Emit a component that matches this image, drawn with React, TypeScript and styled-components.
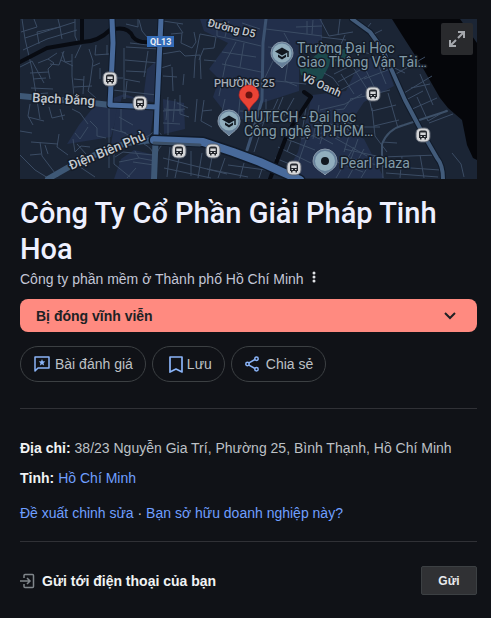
import React from "react";
import styled, { createGlobalStyle } from "styled-components";

const GlobalStyle = createGlobalStyle`
  * { box-sizing: border-box; }
  body {
    margin: 0;
    background: #101217;
    color: #bdc1c6;
    font-family: "Liberation Sans", Arial, sans-serif;
    font-size: 14px;
    line-height: 20px;
  }
`;

const Panel = styled.main`
  padding: 19px 14px 23px 20px;
`;

const MapFrame = styled.section`
  position: relative;
  height: 160px;
  overflow: hidden;
  background: #1b2535;
`;

const MapDrawing = styled.svg`
  display: block;
  width: 100%;
  height: 100%;
  font-family: Roboto, sans-serif;
`;

const ExpandButton = styled.button`
  position: absolute;
  top: 4px;
  right: 4px;
  display: flex;
  align-items: center;
  justify-content: center;
  width: 32px;
  height: 32px;
  padding: 0;
  border: 0;
  border-radius: 2px;
  background: #292a2d;
  color: #a5a8ad;
  cursor: pointer;
`;

const Title = styled.h1`
  margin: 16px 0 0;
  color: #eef0ff;
  font-family: "Google Sans", Roboto, sans-serif;
  font-size: 29px;
  font-weight: 500;
  line-height: 36px;
`;

const Subtitle = styled.div`
  display: flex;
  align-items: center;
  gap: 4px;
  margin-top: 2px;
  color: #c3c6d6;
`;

const MoreButton = styled.button`
  display: flex;
  align-items: center;
  padding: 0 4px 4px;
  border: 0;
  background: none;
  color: #dfe1e5;
  cursor: pointer;
`;

const Banner = styled.button`
  display: flex;
  align-items: center;
  justify-content: space-between;
  width: 100%;
  height: 33px;
  margin-top: 10px;
  padding: 0 20px 0 16px;
  border: 0;
  border-radius: 8px;
  background: #ff8a80;
  color: #202124;
  font: bold 14px/20px "Liberation Sans", Arial, sans-serif;
  cursor: pointer;
`;

const Actions = styled.div`
  display: flex;
  flex-wrap: wrap;
  gap: 6px;
  margin-top: 14px;
`;

const Pill = styled.button`
  display: flex;
  align-items: center;
  gap: 4px;
  height: 36px;
  padding: 0 12px;
  border: 1px solid #3c4043;
  border-radius: 18px;
  background: transparent;
  color: #bdc1c6;
  font: 14px/20px "Liberation Sans", Arial, sans-serif;
  cursor: pointer;

  svg {
    color: #8ab4f8;
  }
`;

const Divider = styled.hr`
  height: 1px;
  margin: ${({ $top }: { $top: number }) => $top}px 0 0;
  border: 0;
  background: #303136;
`;

const Facts = styled.dl`
  display: grid;
  gap: 10px;
  margin: 29px 0 0;
`;

const Fact = styled.div`
  display: flex;
  gap: 4px;

  dt {
    flex: none;
    color: #f1f3f4;
    font-weight: bold;
  }

  dd {
    margin: 0;
  }
`;

const Link = styled.a`
  color: #6f9fff;
  text-decoration: none;
`;

const Suggestions = styled.p`
  margin: 15px 0 0;
`;

const SendRow = styled.form`
  display: flex;
  align-items: center;
  gap: 7px;
  margin-top: 24px;
  color: #f1f3f4;
  font-weight: bold;
`;

const SendButton = styled.button`
  width: 56px;
  height: 29px;
  margin-left: auto;
  padding: 0;
  border: 1px solid #3c4043;
  border-radius: 2px;
  background: #303134;
  color: #e8eaed;
  font: bold 12px/16px "Liberation Sans", Arial, sans-serif;
  cursor: pointer;
`;

const BusStop = ({ x, y }: { x: number; y: number }) => (
  <g transform={`translate(${x} ${y})`}>
    <rect x="-7" y="-7" width="14" height="14" rx="5" fill="#d5d6d8" stroke="#59616e" />
    <path d="M-4-2.5Q-4-4.5-2-4.5H2Q4-4.5 4-2.5V3H3V4.5H1.5V3H-1.5V4.5H-3V3H-4Z" fill="#24272d" />
    <path d="M-2.7-2.5H2.7V0H-2.7Z" fill="#d5d6d8" />
    <path d="M-2.5 1.5H-1M1 1.5H2.5" stroke="#d5d6d8" />
  </g>
);

const SchoolPin = ({ x, y }: { x: number; y: number }) => (
  <g transform={`translate(${x} ${y})`}>
    <path d="M0 15C-2 12-11 8-11 0A11 11 0 1 1 11 0C11 8 2 12 0 15Z" fill="#66809a" stroke="#8797a8" />
    <circle r="9.5" fill="#91aebd" />
    <path d="M-7-1.5 0-5.5 7-1.5 0 2.5Z" fill="#111820" />
    <path d="M-4 1.5 0 4 4 1.5V4L0 6.5-4 4Z" fill="#111820" />
    <path d="M6-1.5V4" stroke="#111820" strokeWidth="1.5" />
  </g>
);

const minorStreets = [
  "M2 0 5 20 12 50 20 100M14 0 17 8 1 13M5 19 55 3M3 31 27 20 57 11M55 0V17L58 24M19 25 17 13 40 8 42 20M40 8 38 0",
  "M0 48 12 42 24 64M18 44 28 40 34 44 28 50 30 60M28 40 37 34M44 32 39 46 30 45M52 35V57L54 77M41 41 53 47M42 33 45 43 52 42M61 26 55 39M69 30 73 42 70 64 68 72 76 79M73 47 80 44M76 26 75 36 89 35M87 26V36M10 54 29 53M13 60 26 59M11 69 33 70M15 75 28 74M54 60 64 61M64 57 63 75M54 68 72 67",
  "M104 29V80M106 28 139 30M105 41 139 44M106 52 126 53M104 60 120 63M118 0V8L106 5M110 24 128 26M119 1 122 12 127 18M128 32 124 58M93 59H103M93 71 137 76M80 49V60M107 62 105 80",
  "M10 85 8 97 13 106M8 98 24 102M29 88 32 99 45 96M0 112 12 114M11 123 38 125M20 123 22 137 38 158M39 115 37 128 48 136M40 90 43 101M52 90 60 94 68 105M53 120 55 133 61 127 70 128M55 114 60 120 68 108M57 125 66 135M0 136 15 151 28 159M10 136 21 135M25 126 28 135M70 102 77 109V117L86 119M64 139 60 148 75 158",
  "M89 86V149M101 90V112L112 118M91 110 106 114M99 98 113 106M94 134V145L110 158M115 132 119 139 135 142M95 138 103 133 133 136M113 143 134 146M107 159 116 149M99 143 119 139M148 82V116M155 80 153 103M168 89 157 84M144 90 163 92M143 104 160 105M136 108Q142 120 151 122M124 119Q136 114 137 105M124 125Q134 130 134 139M145 123Q137 130 136 138",
  "M143 2 163 5M151 15 162 14 161 24 172 29 176 23 174 13M157 5 163 14M180 15 175 40 174 59M142 35 160 32 165 37 180 36 181 60M152 48 153 72M141 49 151 46M184 41 196 42M180 15 196 18 194 29 184 30M184 29 179 41M143 57 157 58M164 55 163 66",
  "M197 4V17L216 21 241 27M216 23 206 42 199 77M202 45 241 53M202 33 236 38M224 24 220 48M209 2 205 18M240 10 222 4M246 10 302 17M276 8 302 7M287 2V15M293 1 292 15M248 28 266 30M264 14 269 23M269 36 265 62 277 67M247 61 286 65M253 42 242 65",
  "M148 78 146 101M160 76V95L169 98M177 80 175 103M184 81 181 102 192 108M143 92 165 90M182 92 192 91M220 80 218 100M220 92 237 93M205 80 202 93M246 80V96L234 133M258 80 249 100 235 107M274 79 264 97M241 91H260M263 78 252 105",
  "M150 128 147 158M161 130 155 159M171 132V157M182 134 178 159M192 138 188 159M205 139 198 159M143 139 207 155M144 149 191 159M187 150 228 158M208 146 246 151M224 144 220 159M243 147 239 159",
  "M286 89 281 119M299 86 293 120M310 91 300 125M269 107 300 120M264 119 295 131M258 128 291 144M255 139 277 148M278 104 267 133M290 110 278 144M281 120 305 113M300 118 313 125",
  "M300 0 309 17 333 13M301 18 326 21M320 0 318 16M325 16 321 25M347 9 351 4M352 16 362 11M307 37 323 35M314 55 334 45M318 63 340 51M321 71 347 57M321 55 334 75M331 45 351 76M342 43 357 74M355 38 366 65M344 60 373 49M322 42 334 31 351 35M366 45 385 54M304 54 313 59 319 67",
  "M330 80 346 77 370 71M349 79 352 92M352 92 376 86M354 107 379 101M352 89 355 117 367 133M368 74 378 109M362 123 377 124M300 91 325 85 342 75M315 90 333 118M304 113 320 119M310 105 329 111M321 101 341 108 360 108M331 80 324 90 315 91M397 78 408 102 427 91M384 82 403 72M390 91 417 79M376 55 405 38M384 74 412 57M400 55 413 86M391 69 410 65M409 104 433 95",
  "M324 130 361 138 418 136M322 137 357 146M317 143 343 153M334 128 316 159M344 130 328 159M355 136 341 159M382 137 380 159M400 136 404 159M362 147 420 151M362 137 363 159M366 154 418 158M315 119 347 137M330 113 324 133M338 120 331 140",
  "M432 134 441 145 444 158",
];

const MapPreview = () => (
  <MapFrame aria-label="Bản đồ">
    <MapDrawing viewBox="0 0 457 160" preserveAspectRatio="xMidYMid slice" role="img" aria-label="Bản đồ Phường 25">
      <rect width="457" height="160" fill="#1b2535" />
      <g fill="#222f4b">
        <path d="M127 50 141 38 139 84 102 78 91 118 47 125 59 106 72 90 91 80 104 75 123 81Z" />
        <path d="M180 0H302V27L279 36V72L242 84 235 104 207 96 193 78 199 60 189 50 208 24 184 12Z" />
        <path d="M97 88 134 89 130 118 113 125 90 132Z" />
        <path d="M114 131 135 136 132 160H94L101 140Z" />
        <path d="M292 76 326 72 340 42 363 35 374 67 344 83 326 110 344 120 364 159H263L278 133Z" />
        <path d="M143 80 164 84 165 110 144 115Z" />
      </g>
      <path d="M278 42 291 40 302 31 311 37 309 47 300 64 281 56ZM311 34 327 29V39L313 43Z" fill="#1b494c" />
      <path d="M372 0 382 16 400 44 420 79 428 89 442 101 447 126 453 139 457 141V24L450 14 440 0Z" fill="#05060a" />
      <g fill="none" stroke="#3b4c64" strokeWidth="1" strokeLinejoin="round">
        {minorStreets.map((street) => (
          <path key={street} d={street} />
        ))}
      </g>
      <g fill="none" strokeLinecap="round" strokeLinejoin="round">
        <path d="M0 43 27 29 62 23Q78 23 90 11 108 6 113 18 118 24 129 23M62 23V0M284 73 291 78 268 113 250 160" stroke="#080b12" strokeWidth="4" />
        <path d="M246 0 243 24 242 81 233 112 227 131" stroke="#3c5270" strokeWidth="3" />
        <path d="M362 138V125Q368 110 384 106L427 92" stroke="#3d5068" strokeWidth="2" />
        <path d="M332 0 350 13 363 31 373 54 385 81 402 113 417 139Q423 146 423 160" stroke="#101a29" strokeWidth="6" />
        <path d="M332 0 350 13 363 31 373 54 385 81 402 113 417 139Q423 146 423 160" stroke="#425b7a" strokeWidth="4" />
        <path d="M0 77 73 84 90 86M28 160Q65 137 107 124L133 121M136 110 134 160" stroke="#3e5876" strokeWidth="6" />
        <path d="M92 0 93 24 90 86 137 88M141 0 137 88 136 116" stroke="#101a29" strokeWidth="7" />
        <path d="M92 0 93 24 90 86 137 88M141 0 137 88 136 116" stroke="#486a9b" strokeWidth="5" />
        <path d="M134 121 183 123 213 133 240 143 280 161" stroke="#101a29" strokeWidth="11" />
        <path d="M134 121 183 123 213 133 240 143 280 161" stroke="#486a9b" strokeWidth="8" />
        <path d="M134 124 180 126" stroke="#3c5068" strokeWidth="3" />
      </g>

      <rect x="127" y="17" width="27" height="11" fill="#346cb8" />
      <text x="130" y="26" fill="#e7edf5" fontSize="9" fontWeight="700">QL13</text>

      <BusStop x={90} y={60} />
      <BusStop x={120} y={84} />
      <BusStop x={159} y={132} />
      <BusStop x={193} y={132} />
      <BusStop x={274} y={149} />
      <BusStop x={353} y={75} />
      <BusStop x={403} y={116} />

      <SchoolPin x={262} y={34} />
      <SchoolPin x={209} y={102} />
      <path d="M305 156C303 153 293 150 293 142A12 12 0 1 1 317 142C317 150 307 153 305 156Z" fill="#66809a" stroke="#8797a8" />
      <circle cx="305" cy="142" r="10" fill="#91aebd" />
      <circle cx="305" cy="142" r="4" fill="#111820" />

      <g stroke="#141b27" strokeWidth="3" strokeLinejoin="round" paintOrder="stroke">
        <g fill="#c3c9d0" fontSize="12" fontWeight="500">
          <text x="12" y="83" fontSize="13" transform="rotate(3 12 83)">Bạch Đằng</text>
          <text x="51" y="151" fontSize="13" transform="rotate(-22 51 151)">Điện Biên Phủ</text>
          <text x="187" y="7" fontSize="11" transform="rotate(14 187 7)">Đường D5</text>
          <text x="281" y="61" fontSize="11" transform="rotate(24 281 61)">Võ Oanh</text>
        </g>
        <text x="194" y="68" fill="#a6adb7" fontSize="11" fontWeight="500">PHƯỜNG 25</text>
        <g fill="#829ba9" fontSize="14">
          <text x="277" y="34">Trường Đại Học</text>
          <text x="277" y="48">Giao Thông Vận Tải…</text>
          <text x="224" y="103">HUTECH - Đại học</text>
          <text x="224" y="117">Công nghệ TP.HCM…</text>
          <text x="320" y="149">Pearl Plaza</text>
        </g>
      </g>

      <path d="M229 92C227 85 219 82 219 76A10 10 0 1 1 239 76C239 82 231 85 229 92Z" fill="#ea4335" stroke="#c5221f" strokeWidth=".6" />
      <circle cx="229" cy="76" r="3.5" fill="#6b1410" />
    </MapDrawing>
    <ExpandButton type="button" aria-label="Mở rộng bản đồ">
      <svg width="16" height="16" viewBox="0 0 16 16" fill="none" stroke="currentColor" strokeWidth="2">
        <path d="M9 1H15V7M15 1 9 7M1 9V15H7M1 15 7 9" />
      </svg>
    </ExpandButton>
  </MapFrame>
);

export default function App() {
  return (
    <>
      <GlobalStyle />
      <Panel>
        <MapPreview />
        <Title>Công Ty Cổ Phần Giải Pháp Tinh Hoa</Title>
        <Subtitle>
          <span>Công ty phần mềm ở Thành phố Hồ Chí Minh</span>
          <MoreButton type="button" aria-label="Tùy chọn khác">
            <svg width="4" height="12" viewBox="0 0 4 12" fill="currentColor">
              <circle cx="2" cy="2" r="1.5" />
              <circle cx="2" cy="6" r="1.5" />
              <circle cx="2" cy="10" r="1.5" />
            </svg>
          </MoreButton>
        </Subtitle>
        <Banner type="button">
          Bị đóng vĩnh viễn
          <svg width="14" height="10" viewBox="0 0 14 10" fill="none" stroke="currentColor" strokeWidth="2">
            <path d="M2 2 7 7 12 2" />
          </svg>
        </Banner>
        <Actions>
          <Pill type="button">
            <svg width="18" height="18" viewBox="0 0 18 18" fill="none" stroke="currentColor" strokeWidth="1.5">
              <path d="M2 2H16V13H5L2 16Z" strokeLinejoin="round" />
              <path d="M9 4 9.9 6.3 12.3 6.5 10.5 8.1 11.1 10.5 9 9.2 6.9 10.5 7.5 8.1 5.7 6.5 8.1 6.3Z" fill="currentColor" stroke="none" />
            </svg>
            Bài đánh giá
          </Pill>
          <Pill type="button">
            <svg width="18" height="20" viewBox="0 0 18 20" fill="none" stroke="currentColor" strokeWidth="1.7">
              <path d="M5 3H17V18L11 15 5 18Z" strokeLinejoin="round" />
            </svg>
            Lưu
          </Pill>
          <Pill type="button">
            <svg width="18" height="18" viewBox="0 0 18 18" fill="none" stroke="currentColor" strokeWidth="1.5">
              <path d="M4.5 8.2 11 4.5M4.5 9.8 11 13.5" />
              <circle cx="3.5" cy="9" r="1.7" />
              <circle cx="12.5" cy="3.7" r="1.7" />
              <circle cx="12.5" cy="14.3" r="1.7" />
            </svg>
            Chia sẻ
          </Pill>
        </Actions>
        <Divider $top={26} />
        <Facts>
          <Fact>
            <dt>Địa chỉ:</dt>
            <dd>38/23 Nguyễn Gia Trí, Phường 25, Bình Thạnh, Hồ Chí Minh</dd>
          </Fact>
          <Fact>
            <dt>Tỉnh:</dt>
            <dd><Link href="#province">Hồ Chí Minh</Link></dd>
          </Fact>
        </Facts>
        <Suggestions>
          <Link href="#edit">Đề xuất chỉnh sửa</Link> · <Link href="#claim">Bạn sở hữu doanh nghiệp này?</Link>
        </Suggestions>
        <Divider $top={18} />
        <SendRow onSubmit={(event: React.FormEvent) => event.preventDefault()}>
          <svg width="15" height="16" viewBox="0 0 15 16" fill="none" stroke="#80868b" strokeWidth="1.5">
            <path d="M4 5V2.5Q4 1.5 5 1.5H12.5Q13.5 1.5 13.5 2.5V13.5Q13.5 14.5 12.5 14.5H5Q4 14.5 4 13.5V11M0 8H10M7 5 10 8 7 11" />
          </svg>
          <span>Gửi tới điện thoại của bạn</span>
          <SendButton type="submit">Gửi</SendButton>
        </SendRow>
      </Panel>
    </>
  );
}
